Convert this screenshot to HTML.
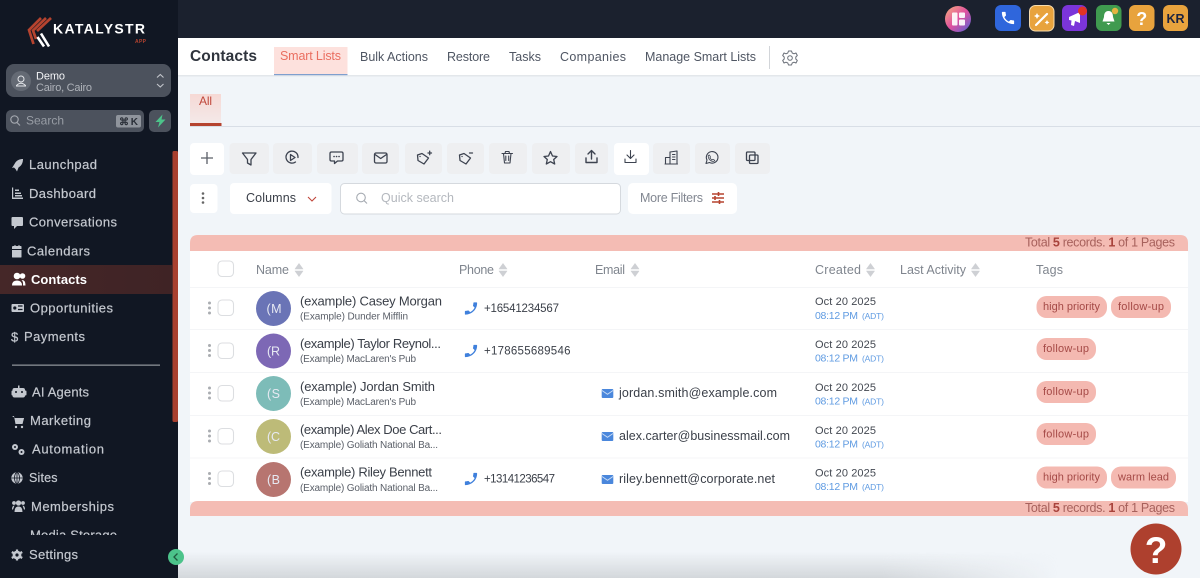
<!DOCTYPE html>
<html lang="en">
<head>
<meta charset="utf-8">
<title>Contacts</title>
<style>
html,body{margin:0;padding:0;width:1200px;height:578px;overflow:hidden;background:#f1f5f9}
svg{display:block;font-family:"Liberation Sans",sans-serif}
.nav{font-size:13px;fill:#c4c8cf;stroke:#c4c8cf;stroke-width:.2}
.tab{font-size:12.5px;fill:#4f5663}
.th{font-size:12.5px;fill:#7f858e}
.nm{font-size:13px;fill:#3a3f48}
.sub{font-size:10px;fill:#5a5f68}
.ph{font-size:12.5px;fill:#3a3f48}
.pn{font-size:11.5px;fill:#3a3f48}
.dt{font-size:11px;fill:#444952}
.tm{font-size:10.5px;fill:#5f9be2}
.adt{font-size:8.5px;fill:#5f9be2}
.tg{font-size:11px;fill:#a54a47}
.tot{font-size:12.5px;fill:#a7615c}
.ic{fill:none;stroke:#3d4350;stroke-width:1.3;stroke-linecap:round;stroke-linejoin:round}
.si{fill:#c4c8cf}
</style>
</head>
<body>
<svg width="1200" height="578" viewBox="0 0 1200 578" xmlns="http://www.w3.org/2000/svg">
<defs>
<linearGradient id="allg" x1="0" y1="0" x2="0" y2="1"><stop offset="0" stop-color="#f6d9d5"/><stop offset="1" stop-color="#f3e9e9"/></linearGradient>
<linearGradient id="bot" x1="0" y1="0" x2="0" y2="1"><stop offset="0" stop-color="#d3d7db" stop-opacity="0"/><stop offset="1" stop-color="#d3d7db"/></linearGradient>
<linearGradient id="botm" x1="0" y1="0" x2="1" y2="0"><stop offset="0" stop-color="#fff"/><stop offset=".8" stop-color="#fff"/><stop offset="1" stop-color="#000"/></linearGradient>
<mask id="botmask"><rect x="178" y="540" width="880" height="38" fill="url(#botm)"/></mask>
<linearGradient id="orb" x1="0" y1="0" x2="1" y2="1"><stop offset="0" stop-color="#f7b27c"/><stop offset=".5" stop-color="#e0509f"/><stop offset="1" stop-color="#4f62d8"/></linearGradient>
<linearGradient id="hl" x1="0" y1="0" x2="1" y2="0"><stop offset="0" stop-color="#452728"/><stop offset="1" stop-color="#3f2325"/></linearGradient>
<g id="sort"><path d="M-4 -1 H4 L0 -6.500 Z M-4 1 H4 L0 6.500 Z" fill="#ced0d4" stroke="#ced0d4" stroke-width=".6" stroke-linejoin="round"/></g>
<g id="dots"><circle cx="0" cy="-5" r="1.500" fill="#aaadb1"/><circle cx="0" cy="0" r="1.500" fill="#aaadb1"/><circle cx="0" cy="5" r="1.500" fill="#aaadb1"/></g>
<path id="hs" d="M6.620 10.790c1.440 2.830 3.760 5.140 6.590 6.590l2.200-2.200c.27-.27.67-.36 1.020-.24 1.120.37 2.330.57 3.570.57.55 0 1 .45 1 1V20c0 .55-.45 1-1 1-9.390 0-17-7.610-17-17 0-.55.45-1 1-1h3.500c.55 0 1 .45 1 1 0 1.250.2 2.450.57 3.570.11.35.03.74-.25 1.020l-2.200 2.200z"/>
<g id="phone" fill="#3f80dc"><use href="#hs" transform="scale(-.68 .68) translate(-12 -12)"/></g>
<g id="mail"><rect x="-5.800" y="-4.500" width="11.600" height="9" rx="1" fill="#4a87dc"/><path d="M-5.500 -3 L0 .8 L5.500 -3" fill="none" stroke="#c9dcf5" stroke-width=".9"/></g>
</defs>

<!-- topbar -->
<rect x="178" y="0" width="1022" height="38" fill="#1b212e"/>
<rect x="178" y="38" width="1022" height="540" fill="#f1f5f9"/>

<!-- top icons -->
<circle cx="958" cy="19" r="13" fill="url(#orb)"/>
<g fill="#fff" opacity=".92"><rect x="952" y="12.500" width="5.500" height="13" rx="1"/><rect x="959" y="12.500" width="6" height="5.500" rx="1"/><rect x="959" y="19.500" width="6" height="6" rx="1"/></g>
<rect x="995" y="5" width="26" height="26" rx="6" fill="#2f66dc"/>
<g fill="#fff"><use href="#hs" transform="translate(1008 18) scale(.68) translate(-12 -12)"/></g>
<rect x="1029.500" y="5.500" width="24.500" height="25.500" rx="6" fill="#e8a33d" stroke="#f7dcae" stroke-width="1"/>
<path d="M1036 25 L1047 14" stroke="#fff" stroke-width="2.200" stroke-linecap="round"/>
<path d="M1037 13 l1 2 2 1 -2 1 -1 2 -1 -2 -2 -1 2 -1z M1047 20 l.8 1.600 1.600 .8 -1.600 .8 -.8 1.600 -.8 -1.600 -1.600 -.8 1.600 -.8z" fill="#fff"/>
<rect x="1062" y="5" width="25" height="26" rx="6" fill="#7b35d9"/>
<path d="M1069 17 L1080 12 L1080 23 L1075 21 L1074 26 L1071 25 L1071.500 20.500 L1069 20 Z" fill="#fff"/>
<circle cx="1082.500" cy="11" r="4.500" fill="#e23325"/>
<rect x="1096" y="5" width="25.500" height="26" rx="6" fill="#3f9a4f"/>
<path d="M1108.500 11 C1105 11 1104 14 1104 17 L1102.500 21.500 L1114.500 21.500 L1113 17 C1113 14 1112 11 1108.500 11 Z M1106.500 23 L1110.500 23 L1108.500 25 Z" fill="#fff"/>
<circle cx="1115" cy="11" r="3.200" fill="#e3b341"/>
<rect x="1129" y="5" width="25.500" height="26" rx="6" fill="#e8a33d"/>
<text x="1141.800" y="25" font-size="18" font-weight="bold" fill="#fff" text-anchor="middle">?</text>
<rect x="1163" y="5" width="25" height="26" rx="6" fill="#e8a33d"/>
<text x="1166.500" y="23" font-size="12.500" font-weight="bold" fill="#1b2340" textLength="18">KR</text>

<!-- header -->
<rect x="178" y="38" width="1022" height="37" fill="#fff"/>
<rect x="178" y="75" width="1022" height="1.500" fill="#e3e7eb"/>
<text x="190" y="61" font-size="15.500" font-weight="bold" fill="#2f343d" textLength="67">Contacts</text>
<rect x="274" y="47" width="73.500" height="27.500" fill="#fde1dd"/>
<rect x="274" y="74" width="73.500" height="1.200" fill="#7f9fce"/>
<text x="280" y="60" class="tab" style="fill:#ea6e60" textLength="61">Smart Lists</text>
<text x="360" y="61" class="tab" textLength="68">Bulk Actions</text>
<text x="447" y="61" class="tab" textLength="43">Restore</text>
<text x="509" y="61" class="tab" textLength="32">Tasks</text>
<text x="560" y="61" class="tab" textLength="66">Companies</text>
<text x="645" y="61" class="tab" textLength="111">Manage Smart Lists</text>
<rect x="769" y="46" width="1" height="23" fill="#d2d5d9"/>
<g transform="translate(790 58)" fill="none" stroke="#6a6f78" stroke-width="1"><circle r="2.300"/><path d="M-1.500 -7 L1.500 -7 L2.200 -5 L4 -4.200 L6 -5 L7.300 -2.500 L5.800 -1 L5.800 1 L7.300 2.500 L6 5 L4 4.200 L2.200 5 L1.500 7 L-1.500 7 L-2.200 5 L-4 4.200 L-6 5 L-7.300 2.500 L-5.800 1 L-5.800 -1 L-7.300 -2.500 L-6 -5 L-4 -4.200 L-2.200 -5 Z" stroke-linejoin="round"/></g>

<!-- All tab -->
<rect x="190" y="94" width="31" height="30" fill="url(#allg)"/>
<rect x="190" y="123" width="31.500" height="3" fill="#b5432f"/>
<rect x="190" y="126" width="1010" height="1" fill="#d8dee6"/>
<text x="199" y="105" font-size="12" fill="#c0483c" textLength="13">All</text>

<!-- toolbar -->
<rect x="190" y="143" width="34" height="32" rx="4" fill="#fff"/>
<path d="M207 152 V164 M201 158 H213" stroke="#5a5f68" stroke-width="1.300" fill="none"/>
<g fill="#eeeff1">
<rect x="229.500" y="143" width="39.500" height="31" rx="4"/>
<rect x="273" y="143" width="39" height="31" rx="4"/>
<rect x="317" y="143" width="41" height="31" rx="4"/>
<rect x="362" y="143" width="37" height="31" rx="4"/>
<rect x="405" y="143" width="37" height="31" rx="4"/>
<rect x="447" y="143" width="37" height="31" rx="4"/>
<rect x="489" y="143" width="38" height="31" rx="4"/>
<rect x="532" y="143" width="38" height="31" rx="4"/>
<rect x="575" y="143" width="33" height="31" rx="4"/>
<rect x="653" y="143" width="37" height="31" rx="4"/>
<rect x="695" y="143" width="35" height="31" rx="4"/>
<rect x="735" y="143" width="35" height="31" rx="4"/>
</g>
<rect x="614" y="143" width="35" height="32" rx="4" fill="#fff"/>
<g class="ic">
<path d="M242.500 153 H256 L251 159.500 V165 L247.500 163 V159.500 Z"/>
<path d="M295.500 162 A6 6 0 1 1 298 157.500 M290.500 154.500 L295 157.500 L290.500 160.500 Z"/>
<path d="M331.500 152 H341.500 Q343 152 343 153.500 V159.500 Q343 161 341.500 161 H337.500 L334.500 163.500 V161 H331.500 Q330 161 330 159.500 V153.500 Q330 152 331.500 152 Z"/>
<path d="M334 156.500 h.1 M336.500 156.500 h.1 M339 156.500 h.1" stroke-width="1.600"/>
<rect x="374.500" y="153" width="12.500" height="10" rx="1.500"/>
<path d="M375 154.500 L380.700 158.500 L386.500 154.500"/>
<path d="M417.500 155 L422 153.500 L428.500 158 L424 164 L418 160.500 Z M420 156.500 h.1 M428 153 h3.500 M429.700 151.200 v3.500"/>
<path d="M459.500 155 L464 153.500 L470.500 158 L466 164 L460 160.500 Z M462 156.500 h.1 M469.500 153 h3"/>
<path d="M502 153.500 H512.500 M505 153.500 L505.500 151.500 H509 L509.500 153.500 M503.500 153.500 L504.500 163 H510 L511 153.500 M505.800 156 V160.500 M508.700 156 V160.500" stroke-width="1.100"/>
<path d="M550.500 151.500 L552.500 156 L557 156.500 L553.700 159.500 L554.700 164 L550.500 161.700 L546.300 164 L547.300 159.500 L544 156.500 L548.500 156 Z"/>
<path d="M591.500 159 V151 M588 154 L591.500 150.500 L595 154 M586 158 V162.500 H597 V158" stroke-width="1.400"/>
<path d="M630.500 150.500 V158 M627 155 L630.500 158.500 L634 155 M625 159 V162.500 H636 V159" stroke-width="1.100"/>
<path d="M665.500 164 V157.500 H670 V164 M670 164 V152 L677 151 V164 M665 164 H677.500 M672.500 154.500 H675 M672.500 157 H675 M672.500 159.500 H675" stroke-width="1.100"/>
<path d="M706 163.500 L707 160 A5.800 5.800 0 1 1 709.500 162.500 Z" stroke-width="1.100"/>
<path d="M709.500 155 L710.500 157 L709.800 158 L711.800 160 L713 159.300 L714.800 160.300 Q714 162 712 161.300 Q708.500 160 708.200 156.500 Q708.200 155 709.500 155 Z" stroke-width=".8"/>
<rect x="746.500" y="152" width="8.500" height="8.500" rx="1"/><rect x="749.500" y="155" width="8.500" height="8.500" rx="1"/>
</g>

<!-- filter row -->
<rect x="190" y="184" width="27.500" height="29" rx="4" fill="#fff"/>
<circle cx="203" cy="193.500" r="1.300" fill="#666"/><circle cx="203" cy="198" r="1.300" fill="#666"/><circle cx="203" cy="202.500" r="1.300" fill="#666"/>
<rect x="230" y="183" width="101.500" height="31" rx="4" fill="#fff"/>
<text x="246" y="202" font-size="12.500" fill="#3a3f48" textLength="50">Columns</text>
<path d="M308 197 L312 201 L316 197" fill="none" stroke="#c0453a" stroke-width="1.100"/>
<rect x="340.500" y="183.500" width="280" height="30.500" rx="4" fill="#fff" stroke="#d5d9de"/>
<circle cx="361" cy="197.500" r="4.300" fill="none" stroke="#a6abb2" stroke-width="1.100"/><path d="M364.300 200.800 L367 203.500" stroke="#a6abb2" stroke-width="1.100"/>
<text x="381" y="202" font-size="12.500" fill="#b4b8be" textLength="73">Quick search</text>
<rect x="628" y="183" width="109" height="31" rx="5" fill="#fff"/>
<text x="640" y="202" font-size="12.500" fill="#828791" textLength="63">More Filters</text>
<g stroke="#b5432f" stroke-width="1.400"><path d="M712 194 H724 M712 198 H724 M712 202 H724"/><path d="M718.500 192 V196 M715 196 V200 M719.500 200 V204" stroke-width="1.600"/></g>

<!-- table -->
<rect x="190" y="250" width="998" height="252" fill="#fff"/>
<path d="M190 251 V243 Q190 235 198 235 H1180 Q1188 235 1188 243 V251 Z" fill="#f4bcb4"/>
<path d="M190 516 V509 Q190 501 198 501 H1180 Q1188 501 1188 509 V516 Z" fill="#f4bcb4"/>
<text x="1025" y="246.500" class="tot" textLength="150">Total <tspan font-weight="bold" fill="#a8433c">5</tspan> records. <tspan font-weight="bold" fill="#a8433c">1</tspan> of 1 Pages</text>
<text x="1025" y="512" class="tot" textLength="150">Total <tspan font-weight="bold" fill="#a8433c">5</tspan> records. <tspan font-weight="bold" fill="#a8433c">1</tspan> of 1 Pages</text>
<g fill="#f4f5f7"><rect x="190" y="287" width="998" height="1"/><rect x="190" y="329" width="998" height="1"/><rect x="190" y="372" width="998" height="1"/><rect x="190" y="415" width="998" height="1"/><rect x="190" y="457.500" width="998" height="1"/></g>

<!-- thead -->
<g fill="#fff" stroke="#dcdee1" stroke-width="1.100">
<rect x="218" y="261" width="15.500" height="15.500" rx="4"/>
<rect x="218" y="300" width="15.500" height="15.500" rx="4"/>
<rect x="218" y="343" width="15.500" height="15.500" rx="4"/>
<rect x="218" y="385.500" width="15.500" height="15.500" rx="4"/>
<rect x="218" y="428.500" width="15.500" height="15.500" rx="4"/>
<rect x="218" y="471" width="15.500" height="15.500" rx="4"/>
</g>
<text x="256" y="274" class="th" textLength="33">Name</text><use href="#sort" x="299" y="270"/>
<text x="459" y="274" class="th" textLength="35">Phone</text><use href="#sort" x="503" y="270"/>
<text x="595" y="274" class="th" textLength="30">Email</text><use href="#sort" x="635" y="270"/>
<text x="815" y="274" class="th" textLength="46">Created</text><use href="#sort" x="870.500" y="270"/>
<text x="900" y="274" class="th" textLength="66">Last Activity</text><use href="#sort" x="975.500" y="270"/>
<text x="1036" y="274" class="th" textLength="27">Tags</text>

<!-- row handles -->
<use href="#dots" x="209.500" y="308"/><use href="#dots" x="209.500" y="350.500"/><use href="#dots" x="209.500" y="393"/><use href="#dots" x="209.500" y="436"/><use href="#dots" x="209.500" y="478.500"/>

<!-- avatars -->
<circle cx="273.500" cy="308.500" r="17.500" fill="#6a74b6"/>
<circle cx="273.500" cy="351" r="17.500" fill="#7d68b5"/>
<circle cx="273.500" cy="393.500" r="17.500" fill="#7dbcb8"/>
<circle cx="273.500" cy="436.500" r="17.500" fill="#bdbb78"/>
<circle cx="273.500" cy="479.500" r="17.500" fill="#b77570"/>
<g font-size="12.500" fill="#e6e9f2">
<text x="266.500" y="313" textLength="15">(M</text>
<text x="267" y="355.500" textLength="13">(R</text>
<text x="267" y="398" textLength="13">(S</text>
<text x="267" y="441" textLength="13">(C</text>
<text x="267" y="484" textLength="13">(B</text>
</g>

<!-- names -->
<text x="300" y="305.500" class="nm" textLength="142">(example) Casey Morgan</text>
<text x="300" y="319.500" class="sub" textLength="108">(Example) Dunder Mifflin</text>
<text x="300" y="348" class="nm" textLength="141">(example) Taylor Reynol...</text>
<text x="300" y="362" class="sub" textLength="116">(Example) MacLaren's Pub</text>
<text x="300" y="391" class="nm" textLength="135">(example) Jordan Smith</text>
<text x="300" y="405" class="sub" textLength="116">(Example) MacLaren's Pub</text>
<text x="300" y="434" class="nm" textLength="142">(example) Alex Doe Cart...</text>
<text x="300" y="448" class="sub" textLength="138">(Example) Goliath National Ba...</text>
<text x="300" y="476.500" class="nm" textLength="132">(example) Riley Bennett</text>
<text x="300" y="491" class="sub" textLength="138">(Example) Goliath National Ba...</text>

<!-- phones -->
<use href="#phone" x="471" y="308.500"/><text x="484" y="312" class="pn" textLength="75">+16541234567</text>
<use href="#phone" x="471" y="351"/><text x="484" y="354.500" class="pn" textLength="86.500">+178655689546</text>
<use href="#phone" x="471" y="479"/><text x="484" y="482.500" class="pn" textLength="71">+13141236547</text>

<!-- emails -->
<use href="#mail" x="607.500" y="393.500"/><text x="619" y="397" class="ph" textLength="158">jordan.smith@example.com</text>
<use href="#mail" x="607.500" y="436.500"/><text x="619" y="440" class="ph" textLength="171">alex.carter@businessmail.com</text>
<use href="#mail" x="607.500" y="479.500"/><text x="619" y="483" class="ph" textLength="156">riley.bennett@corporate.net</text>

<!-- dates -->
<text x="815" y="305" class="dt" textLength="61">Oct 20 2025</text><text x="815" y="319" class="tm" textLength="43">08:12 PM</text><text x="862" y="319" class="adt" textLength="22">(ADT)</text>
<text x="815" y="348" class="dt" textLength="61">Oct 20 2025</text><text x="815" y="361.500" class="tm" textLength="43">08:12 PM</text><text x="862" y="361.500" class="adt" textLength="22">(ADT)</text>
<text x="815" y="391" class="dt" textLength="61">Oct 20 2025</text><text x="815" y="404.500" class="tm" textLength="43">08:12 PM</text><text x="862" y="404.500" class="adt" textLength="22">(ADT)</text>
<text x="815" y="434" class="dt" textLength="61">Oct 20 2025</text><text x="815" y="447.500" class="tm" textLength="43">08:12 PM</text><text x="862" y="447.500" class="adt" textLength="22">(ADT)</text>
<text x="815" y="476.500" class="dt" textLength="61">Oct 20 2025</text><text x="815" y="490" class="tm" textLength="43">08:12 PM</text><text x="862" y="490" class="adt" textLength="22">(ADT)</text>

<!-- tags -->
<g fill="#f4b9b1">
<rect x="1036.500" y="296" width="70.500" height="22" rx="10"/><rect x="1111" y="296" width="60" height="22" rx="10"/>
<rect x="1036.500" y="338" width="59.500" height="22" rx="10"/>
<rect x="1036.500" y="381" width="59.500" height="22" rx="10"/>
<rect x="1036.500" y="423" width="59.500" height="22" rx="10"/>
<rect x="1036.500" y="466.500" width="70.500" height="22" rx="10"/><rect x="1111" y="466.500" width="65" height="22" rx="10"/>
</g>
<text x="1043" y="310" class="tg" textLength="57">high priority</text><text x="1118" y="310" class="tg" textLength="46">follow-up</text>
<text x="1043" y="352" class="tg" textLength="46">follow-up</text>
<text x="1043" y="395" class="tg" textLength="46">follow-up</text>
<text x="1043" y="437.500" class="tg" textLength="46">follow-up</text>
<text x="1043" y="480.500" class="tg" textLength="57">high priority</text><text x="1118" y="480.500" class="tg" textLength="51">warm lead</text>

<!-- bottom shade -->
<rect x="178" y="552" width="880" height="26" fill="url(#bot)" mask="url(#botmask)"/>

<!-- help -->
<circle cx="1156" cy="549" r="25.500" fill="#ae402e"/>
<text x="1156" y="563" font-size="37" font-weight="bold" fill="#fff" text-anchor="middle">?</text>

<!-- sidebar -->
<rect x="0" y="0" width="178" height="578" fill="#111723"/>
<!-- logo -->
<g fill="none" stroke-linejoin="miter">
<path d="M41 18 L29 30 L33.500 44" stroke="#b5432f" stroke-width="2.700"/>
<path d="M46 18 L33 30.500 L36 39" stroke="#b5432f" stroke-width="2.700"/>
<path d="M51 18 L37 31" stroke="#b5432f" stroke-width="2.700"/>
<path d="M37.500 37 L44 46.500 M41 33.500 L49 46.500" stroke="#fff" stroke-width="2.600"/>
</g>
<text x="53" y="33.500" font-size="14" font-weight="bold" fill="#fff" textLength="92">KATALYSTR</text>
<text x="135" y="43" font-size="5" font-weight="bold" fill="#b5432f" textLength="11">APP</text>

<!-- account -->
<rect x="6" y="64" width="165" height="33" rx="8" fill="#4c525d"/>
<circle cx="21" cy="81" r="10" fill="#646a74"/>
<g fill="none" stroke="#e4e6ea" stroke-width="1"><circle cx="21" cy="79" r="3"/><path d="M16.500 85.500 Q21 81 25.500 85.500 L25.500 86 L16.500 86 Z"/></g>
<text x="36" y="79.500" font-size="11" fill="#f3f4f6" textLength="29">Demo</text>
<text x="36" y="91" font-size="11" fill="#aeb2b9" textLength="56">Cairo, Cairo</text>
<path d="M157 77.500 L160.300 74.500 L163.500 77.500 M157 84 L160.300 87 L163.500 84" fill="none" stroke="#c3c6cc" stroke-width="1.100"/>

<!-- search -->
<rect x="6" y="110" width="138" height="22" rx="5" fill="#4c525d"/>
<circle cx="14.500" cy="119.500" r="3.700" fill="none" stroke="#a3a7ae" stroke-width="1.200"/><path d="M17 122.500 L20 125.500" stroke="#a3a7ae" stroke-width="1.200"/>
<text x="26" y="124.500" font-size="12" fill="#989da5" textLength="38">Search</text>
<rect x="116" y="115" width="25" height="12.500" rx="2" fill="#8f949c"/>
<text x="119" y="125" font-size="10" font-weight="bold" fill="#2a2f38" textLength="19">⌘ K</text>
<rect x="149" y="110" width="22" height="22" rx="5" fill="#4c525d"/>
<path d="M162.500 114.500 L155.500 122 L159.500 122 L158 127.500 L165.500 119.500 L161.500 119.500 Z" fill="#4cc38a"/>

<!-- active row -->
<rect x="0" y="265" width="172" height="29" fill="url(#hl)"/>

<!-- nav text -->
<text x="29" y="169" class="nav" textLength="68">Launchpad</text>
<text x="29" y="198" class="nav" textLength="67">Dashboard</text>
<text x="29" y="226.500" class="nav" textLength="88">Conversations</text>
<text x="27" y="255.500" class="nav" textLength="63">Calendars</text>
<text x="31" y="284" font-size="13" font-weight="bold" fill="#fff" textLength="56">Contacts</text>
<text x="30" y="312.500" class="nav" textLength="83">Opportunities</text>
<text x="24" y="341" class="nav" textLength="61">Payments</text>
<text x="11" y="341.500" class="nav" font-size="13">$</text>
<rect x="12" y="364.500" width="148" height="1.300" fill="#8b8f96"/>
<text x="32" y="396.500" class="nav" textLength="57">AI Agents</text>
<text x="30" y="425" class="nav" textLength="61">Marketing</text>
<text x="32" y="453.500" class="nav" textLength="72">Automation</text>
<text x="29" y="482" class="nav" style="font-size:12.500px" textLength="28.500">Sites</text>
<text x="31" y="511" class="nav" textLength="83">Memberships</text>
<text x="30" y="539.500" class="nav" textLength="87">Media Storage</text>
<rect x="0" y="535" width="172" height="43" fill="#111723"/>
<text x="29" y="559" class="nav" textLength="49">Settings</text>

<!-- nav icons -->
<g class="si">
<path d="M12 168 L14.500 164 C16.500 160 20 159 23 159 C23 162 22 165.500 18.500 167.500 L17 171.500 L15.500 169 L14 167.500 Z"/>
<path d="M12 187.500 H13.200 V197.500 H23 V199 H12 Z M15 189.500 H19 V191 H15 Z M15 192.500 H21 V194 H15 Z M15 195 H22 V196.500 H15 Z"/>
<path d="M12.500 217 H22 Q23 217 23 218 V225 Q23 226 22 226 H17 L14 229 V226 H12.500 Q11.500 226 11.500 225 V218 Q11.500 217 12.500 217 Z"/>
<path d="M13 246 H14.500 V245 H15.500 V246 H18.500 V245 H19.500 V246 H21 Q21.500 246 21.500 247 V249 H12 V247 Q12 246 13 246 Z M12 250 H21.500 V257 Q21.500 257.500 21 257.500 H12.500 Q12 257.500 12 257 Z"/>
<circle cx="17" cy="276" r="3.300" fill="#fff"/><circle cx="22.500" cy="276" r="2.800" fill="#fff"/><path d="M12 285.500 Q12 280.500 17 280.500 Q22 280.500 22 285.500 Z M23 285.500 Q23.500 281.500 21.500 280 Q25.500 279.500 25.500 285.500 Z" fill="#fff"/>
<path d="M12.500 304 H23 Q24 304 24 305 V311 Q24 312 23 312 H12.500 Q11.500 312 11.500 311 V305 Q11.500 304 12.500 304 Z"/>
<path d="M18 306 H22.500 M18 309.500 H22.500" stroke="#111723" stroke-width="1.200"/><circle cx="14.800" cy="308" r="1.600" fill="#111723"/>
<rect x="12.500" y="388" width="12.500" height="9.500" rx="2"/><rect x="11.500" y="390.500" width="15" height="5" rx="1"/><rect x="18" y="385.500" width="1.500" height="3"/><circle cx="16" cy="392" r="1" fill="#111723"/><circle cx="22" cy="392" r="1" fill="#111723"/>
<path d="M12 416 H14 L15.500 424 H22.500 L24 418 H15"/><path d="M15 418 H24 L22.500 423 H15.500 Z"/><circle cx="16" cy="427" r="1.200"/><circle cx="22" cy="427" r="1.200"/>
<circle cx="15" cy="447" r="3"/><circle cx="21.500" cy="452" r="3"/><circle cx="15" cy="447" r="1" fill="#111723"/><circle cx="21.500" cy="452" r="1" fill="#111723"/>
<circle cx="17" cy="478" r="5.700"/>
<path d="M11.500 478 H22.500 M17 472.500 V483.500" stroke="#111723" stroke-width=".8"/><ellipse cx="17" cy="478" rx="2.500" ry="5.500" fill="none" stroke="#111723" stroke-width=".8"/>
<circle cx="18.500" cy="503" r="2.600"/><circle cx="14" cy="503" r="1.900"/><circle cx="23" cy="503" r="1.900"/><path d="M14.500 512 Q14.500 506.500 18.500 506.500 Q22.500 506.500 22.500 512 Z M12 509.500 Q12 505.500 14.500 505.500 L13 509.500 Z M25 509.500 Q25 505.500 22.500 505.500 L24 509.500 Z"/>
<circle cx="17" cy="555" r="4.400"/>
<path d="M17 549.500 V560.500 M11.800 552 L22.200 558 M11.800 558 L22.200 552" stroke="#c4c8cf" stroke-width="2.200"/>
<circle cx="17" cy="555" r="1.600" fill="#111723"/>
</g>

<!-- sidebar scrollbar -->
<rect x="172.500" y="151" width="5.500" height="271" rx="1.500" fill="#a8402f"/>

<!-- collapse -->
<circle cx="176" cy="557" r="8" fill="#4cc38a"/>
<path d="M177.500 553.500 L174 557 L177.500 560.500" fill="none" stroke="#1f5a3e" stroke-width="1.300"/>
</svg>
</body>
</html>
